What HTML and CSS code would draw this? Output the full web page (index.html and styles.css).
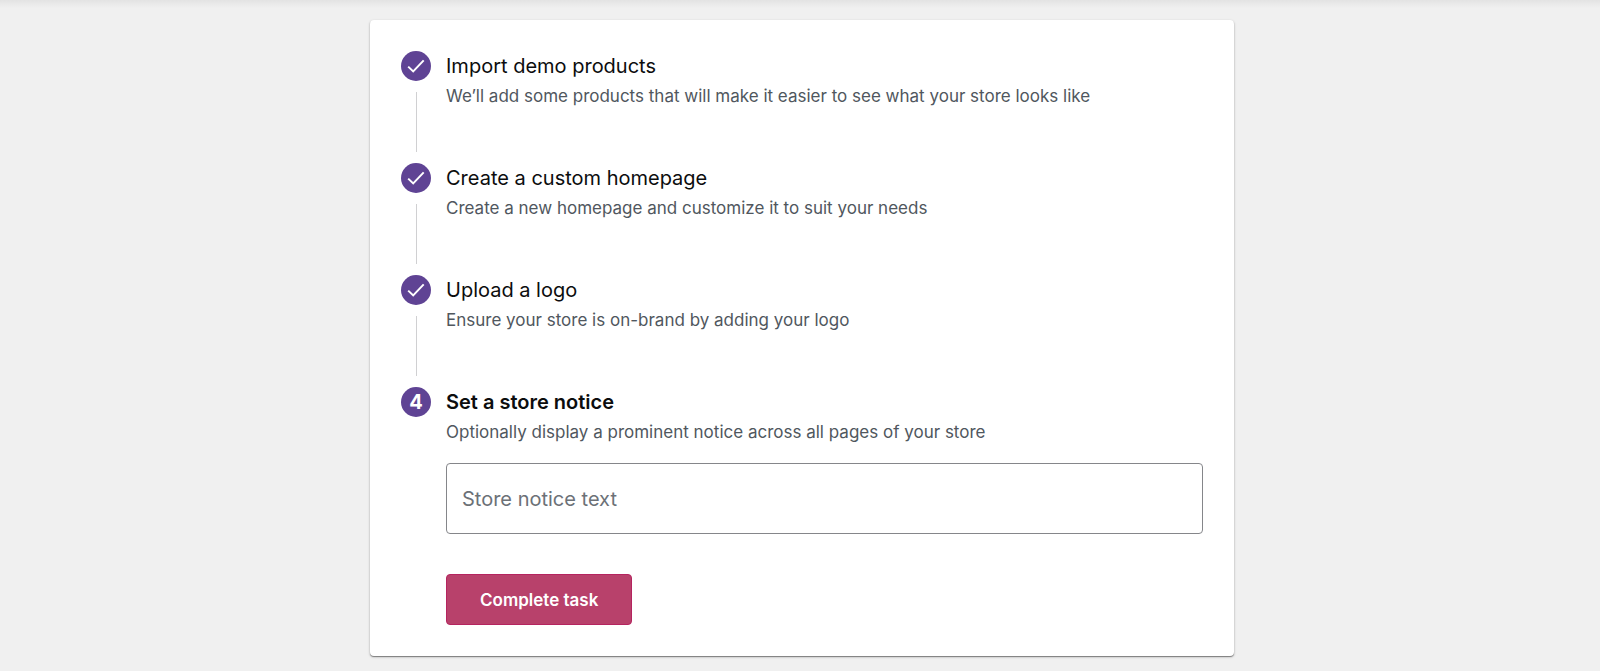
FILE: index.html
```html
<!DOCTYPE html>
<html lang="en">
<head>
<meta charset="utf-8">
<meta name="viewport" content="width=device-width, initial-scale=1">
<title>Personalize my store</title>
<link rel="stylesheet" href="styles.css">
</head>
<body>
<main class="page">
  <form class="card">
    <ol class="stepper">
      <li class="step">
        <div class="rail">
          <span class="badge"><svg class="check" viewBox="0 0 30 30" aria-hidden="true"><path d="M7.2 15.6L12.2 20.4L22.7 9.4"/></svg></span>
          <span class="line"></span>
        </div>
        <div class="body">
          <h2 class="title">Import demo products</h2>
          <p class="text">We’ll add some products that will make it easier to see what your store looks like</p>
        </div>
      </li>
      <li class="step">
        <div class="rail">
          <span class="badge"><svg class="check" viewBox="0 0 30 30" aria-hidden="true"><path d="M7.2 15.6L12.2 20.4L22.7 9.4"/></svg></span>
          <span class="line"></span>
        </div>
        <div class="body">
          <h2 class="title">Create a custom homepage</h2>
          <p class="text">Create a new homepage and customize it to suit your needs</p>
        </div>
      </li>
      <li class="step">
        <div class="rail">
          <span class="badge"><svg class="check" viewBox="0 0 30 30" aria-hidden="true"><path d="M7.2 15.6L12.2 20.4L22.7 9.4"/></svg></span>
          <span class="line"></span>
        </div>
        <div class="body">
          <h2 class="title">Upload a logo</h2>
          <p class="text">Ensure your store is on-brand by adding your logo</p>
        </div>
      </li>
      <li class="step step-active">
        <div class="rail">
          <span class="badge">4</span>
        </div>
        <div class="body">
          <h2 class="title">Set a store notice</h2>
          <p class="text">Optionally display a prominent notice across all pages of your store</p>
          <input class="field" type="text" aria-label="Store notice text" placeholder="Store notice text">
          <button class="button" type="button">Complete task</button>
        </div>
      </li>
    </ol>
  </form>
</main>
</body>
</html>
```
FILE: styles.css
```css
* {
  box-sizing: border-box;
}

body {
  margin: 0;
  background: #f0f0f0;
  color: #0c0d0e;
  font-family: Inter, "Liberation Sans", sans-serif;
}

.page {
  min-height: 100vh;
  padding: 20px 16px 15px 20px;
  background: linear-gradient(#e3e3e3, #f0f0f0 8px);
}

.card {
  max-width: 864px;
  margin: 0 auto;
  padding: 31px;
  background: #fff;
  border-radius: 4px;
  box-shadow: 0 1px 1px rgba(0, 0, 0, 0.4), 0 1px 3px rgba(0, 0, 0, 0.2);
}

.stepper {
  margin: 0;
  padding: 0;
  list-style: none;
}

.step {
  display: flex;
  gap: 15px;
  min-height: 112px;
}

.rail {
  display: flex;
  flex-direction: column;
  align-items: center;
  gap: 11px;
  padding-bottom: 11px;
}

.badge {
  display: flex;
  flex: none;
  align-items: center;
  justify-content: center;
  width: 30px;
  height: 30px;
  border-radius: 50%;
  background: #5f4394;
  color: #fff;
  font-size: 20px;
  font-weight: 700;
}

.check {
  width: 30px;
  height: 30px;
  fill: none;
  stroke: #fff;
  stroke-width: 2;
}

.line {
  flex: 1;
  width: 1px;
  background: #d0d0d2;
}

.body {
  flex: 1;
  min-width: 0;
}

.title {
  margin: 0;
  font-size: 20px;
  font-weight: 400;
  line-height: 31px;
}

.step-active .title {
  font-weight: 600;
}

.text {
  margin: 0;
  color: #50575e;
  font-size: 17px;
  line-height: 28px;
}

.field {
  display: block;
  width: 100%;
  height: 71px;
  margin: 17px 0 40px;
  padding: 0 15px;
  border: 1px solid #85868a;
  border-radius: 4px;
  background: #fff;
  color: inherit;
  font: inherit;
  font-size: 20px;
}

.field::placeholder {
  color: #6c7177;
  opacity: 1;
}

.button {
  display: block;
  height: 51px;
  padding: 0 33px;
  border: 1px solid #b5245f;
  border-radius: 4px;
  background: #b8416b;
  color: #fff;
  font: inherit;
  font-size: 17px;
  font-weight: 600;
}
```
